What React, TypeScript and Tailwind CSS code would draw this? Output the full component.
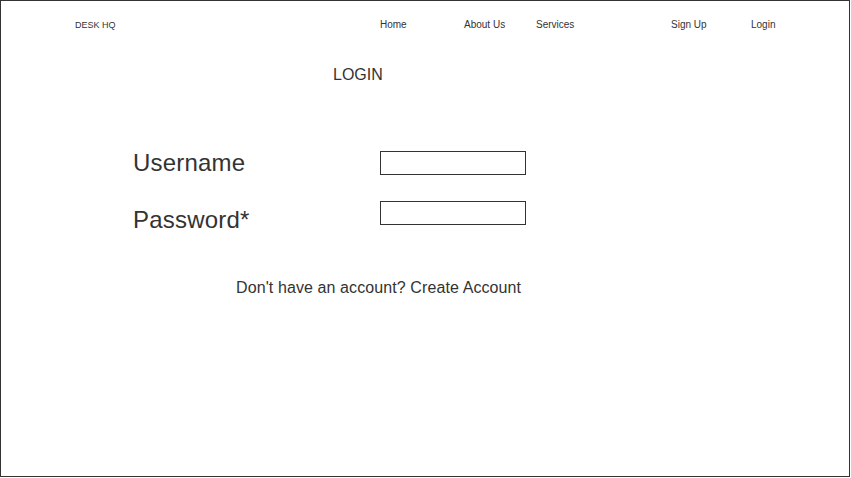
const navItems = [
  { label: "Home", width: "w-[84px]" },
  { label: "About Us", width: "w-[72px]" },
  { label: "Services", width: "w-[135px]" },
  { label: "Sign Up", width: "w-[80px]" },
  { label: "Login", width: "w-[60px]" },
];

const Header = () => (
  <div className="flex flex-row items-baseline pt-[18px] pl-[74px] leading-[12px]">
    <span className="w-[305px] text-[9px]">DESK HQ</span>
    {navItems.map((item) => (
      <a key={item.label} className={`${item.width} text-[10px] cursor-pointer`}>
        {item.label}
      </a>
    ))}
  </div>
);

const Field = ({ label }: { label: string }) => (
  <p className="text-[24px] leading-[28px] tracking-[0.2px]">{label}</p>
);

export default function App() {
  return (
    <div
      className="w-[850px] h-[477px] border border-[#333] bg-white text-[#333] flex flex-col"
      style={{ fontFamily: '"Liberation Sans", Arial, sans-serif' }}
    >
      <Header />

      <h1 className="mt-[35px] pl-[332px] text-[16px] leading-[18px]">LOGIN</h1>

      <div className="flex flex-row items-start mt-[65px] pl-[132px]">
        <div className="flex flex-col w-[247px] gap-[29px]">
          <Field label="Username" />
          <Field label="Password*" />
        </div>
        <div className="flex flex-col mt-[2px] gap-[26px]">
          <input type="text" className="w-[146px] h-[24px] border border-[#333] outline-none" />
          <input type="password" className="w-[146px] h-[24px] border border-[#333] outline-none" />
        </div>
      </div>

      <p className="mt-[45px] pl-[235px] text-[16px] leading-[18px] tracking-[0.1px]">
        Don't have an account? Create Account
      </p>
    </div>
  );
}
